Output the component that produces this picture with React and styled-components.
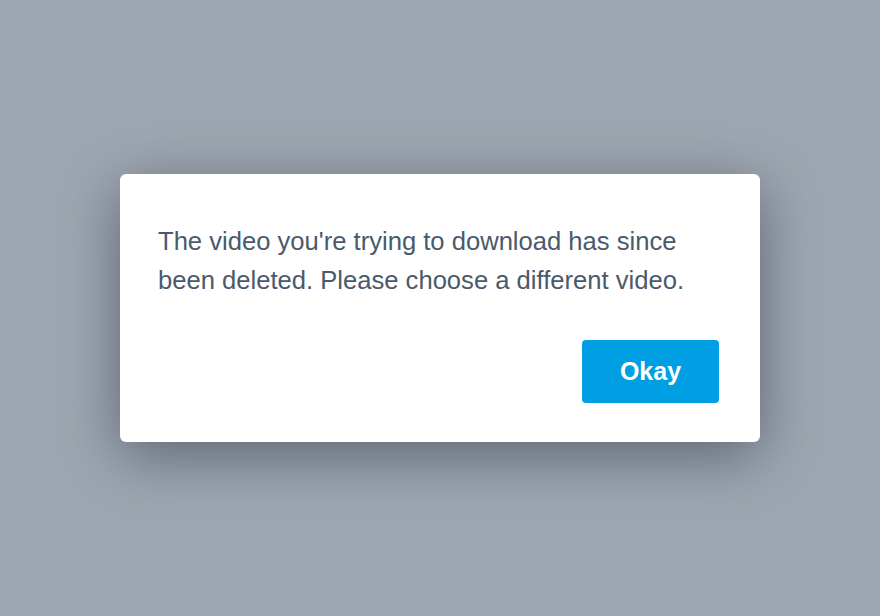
import React from "react";
import styled, { createGlobalStyle } from "styled-components";

const GlobalStyle = createGlobalStyle`
  html, body, #root {
    margin: 0;
    height: 100%;
  }
  body {
    background-color: #9ea7b1;
    font-family: "Liberation Sans", Arial, sans-serif;
  }
`;

const Overlay = styled.div`
  height: 100%;
  display: flex;
  align-items: center;
  justify-content: center;
`;

const Modal = styled.div`
  box-sizing: border-box;
  width: 640px;
  height: 268px;
  padding: 48px 41px 39px 38px;
  background-color: white;
  border-radius: 6px;
  box-shadow: 0 14px 60px rgba(40, 48, 60, 0.55);
  display: flex;
  flex-direction: column;
`;

const Message = styled.p`
  margin: 0;
  font-size: 25.6px;
  line-height: 39px;
  color: #4a5a6c;
`;

const Actions = styled.div`
  margin-top: auto;
  display: flex;
  justify-content: flex-end;
`;

const Button = styled.button`
  width: 137px;
  height: 63px;
  border: none;
  border-radius: 4px;
  background-color: #009ee2;
  color: white;
  font-family: inherit;
  font-size: 25px;
  font-weight: bold;
  cursor: pointer;
`;

const App = () => {
  return (
    <>
      <GlobalStyle />
      <Overlay>
        <Modal>
          <Message>
            The video you're trying to download has since been deleted. Please
            choose a different video.
          </Message>
          <Actions>
            <Button>Okay</Button>
          </Actions>
        </Modal>
      </Overlay>
    </>
  );
};

export default App;
